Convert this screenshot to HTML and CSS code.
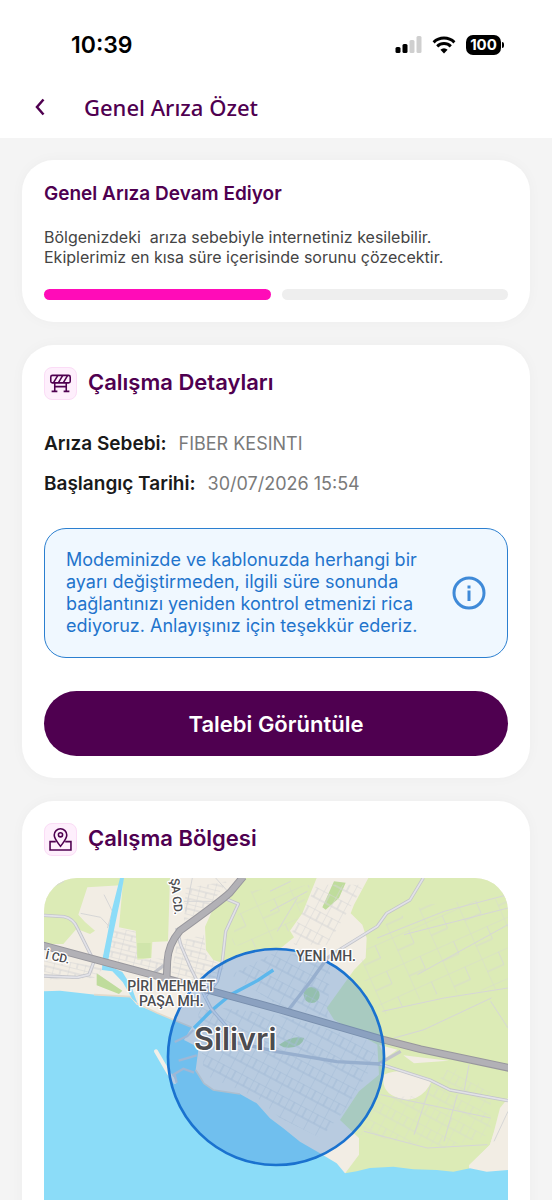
FILE: index.html
```html
<!DOCTYPE html>
<html lang="tr">
<head>
    <meta charset="UTF-8">
    <meta name="viewport" content="width=device-width, initial-scale=1.0">
    <title>Genel Arıza Özet</title>
    <link rel="stylesheet" href="styles.css">
</head>
<body>
    <header>
        <div class="status-bar">
            <span class="clock">10:39</span>
            <div class="status-icons">
                <svg class="signal" viewBox="0 0 26 18" aria-hidden="true">
                    <rect x="0" y="11" width="5" height="6" rx="1.5"/>
                    <rect x="7" y="8" width="5" height="9" rx="1.5"/>
                    <rect x="14" y="4" width="5" height="13" rx="1.5" fill="#cfcfcf"/>
                    <rect x="21" y="0" width="5" height="17" rx="1.5" fill="#cfcfcf"/>
                </svg>
                <svg class="wifi" viewBox="0 0 24 18" aria-hidden="true">
                    <path d="M1.6 6.3a15 15 0 0 1 20.8 0M5.2 10.3a9.8 9.8 0 0 1 13.6 0" fill="none" stroke="#000" stroke-width="3"/>
                    <path d="M12 17.5l-3.600-3.700a5 5 0 0 1 7.200 0z"/>
                </svg>
                <div class="battery">100</div>
            </div>
        </div>
        <div class="title-bar">
            <button class="back" aria-label="Geri">
                <svg viewBox="0 0 12 18" aria-hidden="true"><path d="M9.500 1.500L3 9l6.500 7.500"/></svg>
            </button>
            <h1>Genel Arıza Özet</h1>
        </div>
    </header>
    <main>
        <section class="card">
            <h2 class="status-title">Genel Arıza Devam Ediyor</h2>
            <p class="status-text">Bölgenizdeki&nbsp; arıza sebebiyle internetiniz kesilebilir. Ekiplerimiz en kısa süre içerisinde sorunu çözecektir.</p>
            <div class="steps">
                <span class="step done"></span>
                <span class="step"></span>
            </div>
        </section>

        <section class="card">
            <div class="card-head">
                <span class="card-icon">
                    <svg viewBox="0 0 22 22" aria-hidden="true">
                        <rect x="1.700" y="3.200" width="18.600" height="7.200" rx="1.600"/>
                        <path d="M4.500 10l3.800-6.500M9.200 10l3.800-6.500M13.900 10l3.800-6.500M5.500 10.500V18.500M16.500 10.500V18.500M2.500 18.500h5.500M14 18.500h5.500M5.500 14h11"/>
                    </svg>
                </span>
                <h2>Çalışma Detayları</h2>
            </div>
            <dl class="details">
                <div><dt>Arıza Sebebi:</dt><dd>FIBER KESINTI</dd></div>
                <div><dt>Başlangıç Tarihi:</dt><dd>30/07/2026 15:54</dd></div>
            </dl>
            <div class="notice">
                <p>Modeminizde ve kablonuzda herhangi bir ayarı değiştirmeden, ilgili süre sonunda bağlantınızı yeniden kontrol etmenizi rica ediyoruz. Anlayışınız için teşekkür ederiz.</p>
                <svg viewBox="0 0 34 34" aria-hidden="true">
                    <circle cx="17" cy="17" r="15"/>
                    <path d="M17 14.500v10.500M17 9.500v3"/>
                </svg>
            </div>
            <button class="primary">Talebi Görüntüle</button>
        </section>

        <section class="card">
            <div class="card-head">
                <span class="card-icon">
                    <svg viewBox="0 0 22 22" aria-hidden="true">
                        <path d="M11 17.500C8 13.500 5 10.500 5 6.800a6 6 0 0 1 12 0C17 10.500 14 13.500 11 17.500z"/>
                        <circle cx="11" cy="6.500" r="2"/>
                        <path d="M6.500 13H1v8h20v-8h-5.500"/>
                    </svg>
                </span>
                <h2>Çalışma Bölgesi</h2>
            </div>
            <svg class="map" viewBox="0 0 1392 1140" role="img" aria-label="Silivri haritası">
                <defs>
                    <pattern id="blocks" width="46" height="30" patternUnits="userSpaceOnUse" patternTransform="rotate(14)">
                        <path d="M0 0H46M0 0V30M23 15V30M0 15H46"/>
                    </pattern>
                    <pattern id="blocksTilt" width="40" height="60" patternUnits="userSpaceOnUse" patternTransform="rotate(28)">
                        <path d="M0 0H40M0 0V60M20 0V30M0 30H40"/>
                    </pattern>
                    <pattern id="fields" width="110" height="84" patternUnits="userSpaceOnUse" patternTransform="rotate(-24)">
                        <path d="M0 0H110M0 0V84M55 0V42M0 42H55"/>
                    </pattern>
                </defs>
                <rect class="land" width="1392" height="1140"/>

                <!-- green areas -->
                <g class="green">
                    <path d="M0 0H238L230 22 130 28 103 110 123 132 153 158 138 168 98 152 58 198 0 198z"/>
                    <path d="M238 0H378L372 190 325 192 322 240 280 245 275 158 225 148z"/>
                    <path d="M600 0H818L775 106 738 158 750 178 708 212 640 216 580 230 545 258 508 246 486 216 483 146 510 86 570 40z"/>
                    <path d="M973 0H1392V660L1360 735 1338 800 1275 862V900H893L945 830 945 780 888 726 945 640 1005 590 1000 500 870 425 848 390 930 276 965 240 968 180 955 140 920 106 930 80z"/>
                </g>
                <path class="park" d="M158 286L235 338 225 348 158 322zM870 10L905 14 885 60 845 95 835 88zM705 500q40-30 76-20q-10 34-62 28z"/>
                <circle class="park" cx="803" cy="351" r="24"/>
                <path class="park" d="M280 195h40v45h-40z" opacity=".4"/>
                <path class="land" d="M1020 590Q1060 570 1110 588L1165 604Q1150 645 1115 660 1080 672 1050 655 1010 635 1020 590zM1078 532L1215 548 1110 556zM1005 500L1060 515 1025 540zM1392 660L1368 690 1350 760 1338 800 1275 862 1290 900H1392z"/>

                <!-- minor streets -->
                <g class="streets">
                    <path fill="url(#blocks)" d="M205 150L275 160 280 245 372 240 368 296 170 245zM425 30L550 10 500 80 420 130zM400 190L480 170 486 230 540 270 480 340 380 300z"/>
                    <path fill="url(#blocks)" d="M0 238L180 270 150 300 0 305z"/>
                    <path fill="url(#blocksTilt)" d="M460 380L700 410 980 490 1000 540 900 700 830 780 708 720 640 660 480 590z"/>
                    <path fill="url(#blocksTilt)" d="M560 290L700 220 860 250 850 420 700 380zM818 20L960 20 850 200 750 200 745 160z"/>
                    <path fill="url(#fields)" opacity=".7" d="M940 270L1000 150 1140 80 1392 60V330L1160 350 1020 410z"/>
                    <path fill="url(#blocksTilt)" opacity=".5" d="M1010 660L1150 650 1220 560 1340 640 1340 770 1200 810 940 770z"/>
                    <path fill="url(#fields)" opacity=".6" d="M600 40L800 20 750 150 650 210 560 200z"/>
                </g>
                <g class="lines">
                    <path d="M0 40L60 10M110 106L170 118 200 150M180 50L205 100 190 150M515 0L560 50M445 0L425 100M420 70H520"/>
                    <path d="M678 40L740 10M678 100L790 40M700 160L760 60M1000 180L1200 100 1392 50M1015 400L1200 360 1392 330M1080 170L1392 90M1120 290L1392 140M1340 370L1392 450M1050 480L1140 455 1342 360"/>
                    <path d="M960 760L1150 810 1330 800M1010 650L1340 720M1392 700L1350 790M1240 650L1200 790M1160 620L1110 770M1275 560L1260 640"/>
                </g>

                <!-- water -->
                <path class="water" d="M0 340L48 338 168 352 258 356 278 380 338 404 388 425 443 448 420 486 448 500 463 516 455 576 480 616 508 636 588 648 638 676 678 721 718 751 768 791 828 826 878 856 903 886 938 880 978 870 1048 866 1108 874 1178 876 1228 881 1278 871 1328 881 1392 876V1140H0z"/>
                <path class="shore" d="M150 350L258 356 278 372M278 376L338 404 388 425 443 448M455 576L480 616 508 636 588 648"/>
                <path class="river" d="M228 0H240L228 70 205 180 190 262 235 282 262 325 280 376 265 362 236 312 205 280 174 276 176 240 190 170 205 90z"/>
                <path class="stream" d="M688 276L640 308 560 350 500 400 450 450"/>
                <path class="pier" d="M336 520L372 582 392 612"/>
                <path class="jetty" d="M392 492L430 474 448 456M404 548L458 532M385 592L418 572 450 584M392 590L398 614"/>

                <!-- roads -->
                <g class="road">
                    <path d="M0 112L60 116Q88 122 100 150L150 250 135 290 100 298 0 294"/>
                    <path d="M398 150L410 200 440 270 500 390 560 460M540 60L583 78 545 160 535 250 520 310 480 360M325 288L360 262"/>
                    <path d="M893 211L1000 145 1028 106 1098 66 1138 0M893 211L850 240 800 310 730 400M1000 560L1070 520"/>
                    <path d="M560 490L698 521 878 551 1008 558 1158 606 1218 636 1392 668"/>
                </g>
                <g class="road-core">
                    <path d="M0 112L60 116Q88 122 100 150L150 250 135 290 100 298 0 294"/>
                    <path d="M400 158L410 200 440 270 500 390 560 460M540 60L583 78 545 160 535 250 520 310 480 360"/>
                    <path d="M893 211L1000 145 1028 106 1098 66 1138 0"/>
                    <path d="M1008 558L1158 606 1218 636 1392 668"/>
                </g>
                <path class="highway-edge" d="M598 -4L558 44Q530 70 408 158 372 200 370 250L368 300"/>
                <path class="highway-edge" d="M-4 202L368 302 708 395 1018 485 1130 514 1396 570"/>
                <path class="highway" d="M598 -4L558 44Q530 70 408 158 372 200 370 250L368 300"/>
                <path class="highway" d="M-4 202L368 302 708 395 1018 485 1130 514 1396 570"/>

                <!-- outage radius -->
                <circle class="radius" cx="696" cy="537" r="324"/>

                <g class="labels">
                    <text x="382" y="338">PİRİ MEHMET</text>
                    <text x="382" y="384">PAŞA MH.</text>
                    <text x="846" y="250">YENİ MH.</text>
                    <text transform="translate(2 242) rotate(12)" class="street">İ CD.</text>
                    <text transform="translate(380 2) rotate(84)" class="street">ŞA CD.</text>
                    <text x="574" y="516" class="city">Silivri</text>
                </g>
            </svg>
        </section>
    </main>
</body>
</html>
```
FILE: styles.css
```css
* {
    box-sizing: border-box;
}
body {
    margin: 0;
    height: 100vh;
    display: flex;
    flex-direction: column;
    font-family: Inter, "Liberation Sans", sans-serif;
    background-color: #f4f4f4;
    color: #1a1a1a;
}
h1, h2, p, dl, dd {
    margin: 0;
}
button {
    font-family: inherit;
    border: none;
    padding: 0;
    cursor: pointer;
}
header {
    flex: none;
    background-color: #fff;
}
.status-bar {
    display: flex;
    justify-content: space-between;
    align-items: center;
    height: 78px;
    padding: 12px 51px 0 71px;
}
.clock {
    font-size: 23px;
    font-weight: 600;
    color: #000;
}
.status-icons {
    display: flex;
    align-items: center;
    gap: 10px;
}
.signal {
    width: 27px;
    height: 18px;
}
.wifi {
    width: 24px;
    height: 18px;
}
.battery {
    position: relative;
    width: 35px;
    height: 20px;
    border-radius: 7px;
    background-color: #000;
    color: #fff;
    font-size: 15px;
    font-weight: 700;
    line-height: 20px;
    text-align: center;
}
.battery::after {
    content: "";
    position: absolute;
    right: -3px;
    top: 7px;
    width: 2px;
    height: 6px;
    border-radius: 0 2px 2px 0;
    background-color: #000;
}
.title-bar {
    display: flex;
    align-items: center;
    gap: 36px;
    height: 60px;
    padding: 0 32px 2px;
}
.back {
    display: flex;
    background: none;
}
.back svg {
    width: 16px;
    height: 18px;
    fill: none;
    stroke: #4f0050;
    stroke-width: 2.500;
}
h1 {
    font-family: "Noto Sans", sans-serif;
    font-size: 22px;
    font-weight: 500;
    line-height: 30px;
    color: #4f0050;
}
main {
    flex: 1;
    min-height: 0;
    overflow-y: auto;
    scrollbar-width: none;
    padding: 22px;
}
.card {
    margin-bottom: 23px;
    padding: 22px;
    border-radius: 32px;
    background-color: #fff;
    box-shadow: 0 0 14px rgba(0, 0, 0, 0.03);
}
h2 {
    font-size: 22px;
    font-weight: 600;
    line-height: 30px;
    color: #4f0050;
}
.status-title {
    font-size: 19px;
    line-height: 24px;
}
.status-text {
    margin-top: 21px;
    font-size: 16px;
    line-height: 20px;
    color: #444;
}
.steps {
    display: flex;
    gap: 11px;
    margin-top: 22px;
}
.step {
    flex: 1;
    height: 11px;
    border-radius: 6px;
    background-color: #eee;
}
.step.done {
    background-color: #ff0cb8;
}
.card-head {
    display: flex;
    align-items: flex-start;
    gap: 11px;
}
.card-icon {
    display: flex;
    align-items: center;
    justify-content: center;
    width: 33px;
    height: 33px;
    border: 1px solid #fbdcf6;
    border-radius: 8px;
    background-color: #feeffc;
}
.card-icon svg {
    width: 23px;
    height: 23px;
    fill: none;
    stroke: #4f0050;
    stroke-width: 1.500;
}
.details {
    margin-top: 32px;
    font-size: 19px;
    line-height: 24px;
}
.details div {
    display: flex;
    gap: 12px;
    margin-bottom: 16px;
}
dt {
    font-weight: 600;
}
dd {
    font-size: 18px;
    color: #7a7a7a;
}
.notice {
    display: flex;
    align-items: center;
    justify-content: space-between;
    gap: 22px;
    margin-top: 32px;
    padding: 20px 21px;
    border: 1px solid #2b7fd0;
    border-radius: 22px;
    background-color: #f0f8ff;
    font-size: 18px;
    line-height: 22px;
    color: #1f74cc;
}
.notice svg {
    flex: none;
    width: 34px;
    height: 34px;
    fill: none;
    stroke: #3f8ad8;
    stroke-width: 3;
}
.primary {
    display: block;
    width: 100%;
    height: 65px;
    margin-top: 33px;
    border-radius: 33px;
    background-color: #4f0050;
    color: #fff;
    font-size: 22px;
    font-weight: 600;
}

/* map */
.map {
    display: block;
    width: 100%;
    margin-top: 22px;
    border-radius: 33px;
}
.land {
    fill: #f2ede4;
}
.green {
    fill: #dcebb6;
}
.park {
    fill: #bfdc9c;
}
.water, .river {
    fill: #8bdcf8;
}
.stream {
    fill: none;
    stroke: #6fd0f5;
    stroke-width: 10;
}
.shore {
    fill: none;
    stroke: #e3dacb;
    stroke-width: 5;
}
.pier {
    fill: none;
    stroke: #f2efe8;
    stroke-width: 12;
    stroke-linecap: round;
}
.jetty {
    fill: none;
    stroke: #cfd0d4;
    stroke-width: 7;
}
pattern path, .lines {
    fill: none;
    stroke: #d6d6d6;
    stroke-width: 3;
}
.road, .road-core {
    fill: none;
    stroke: #c3c4ca;
    stroke-width: 10;
    stroke-linejoin: round;
}
.road-core {
    stroke: #e2e2e8;
    stroke-width: 5;
}
.highway, .highway-edge {
    fill: none;
    stroke: #b2b1b6;
    stroke-width: 17;
}
.highway-edge {
    stroke: #98979d;
    stroke-width: 23;
}
.radius {
    fill: rgba(50, 125, 215, 0.3);
    stroke: #1a72cf;
    stroke-width: 8;
}
.labels text {
    font-family: "Liberation Sans Narrow", Roboto, sans-serif;
    font-size: 42px;
    font-weight: 500;
    text-anchor: middle;
    fill: #4c4c50;
    stroke: #fff;
    stroke-width: 8;
    stroke-linejoin: round;
    paint-order: stroke;
}
.labels .street {
    font-size: 36px;
    text-anchor: start;
}
.labels .city {
    font-family: Inter, sans-serif;
    font-size: 92px;
    font-weight: 600;
}
```
